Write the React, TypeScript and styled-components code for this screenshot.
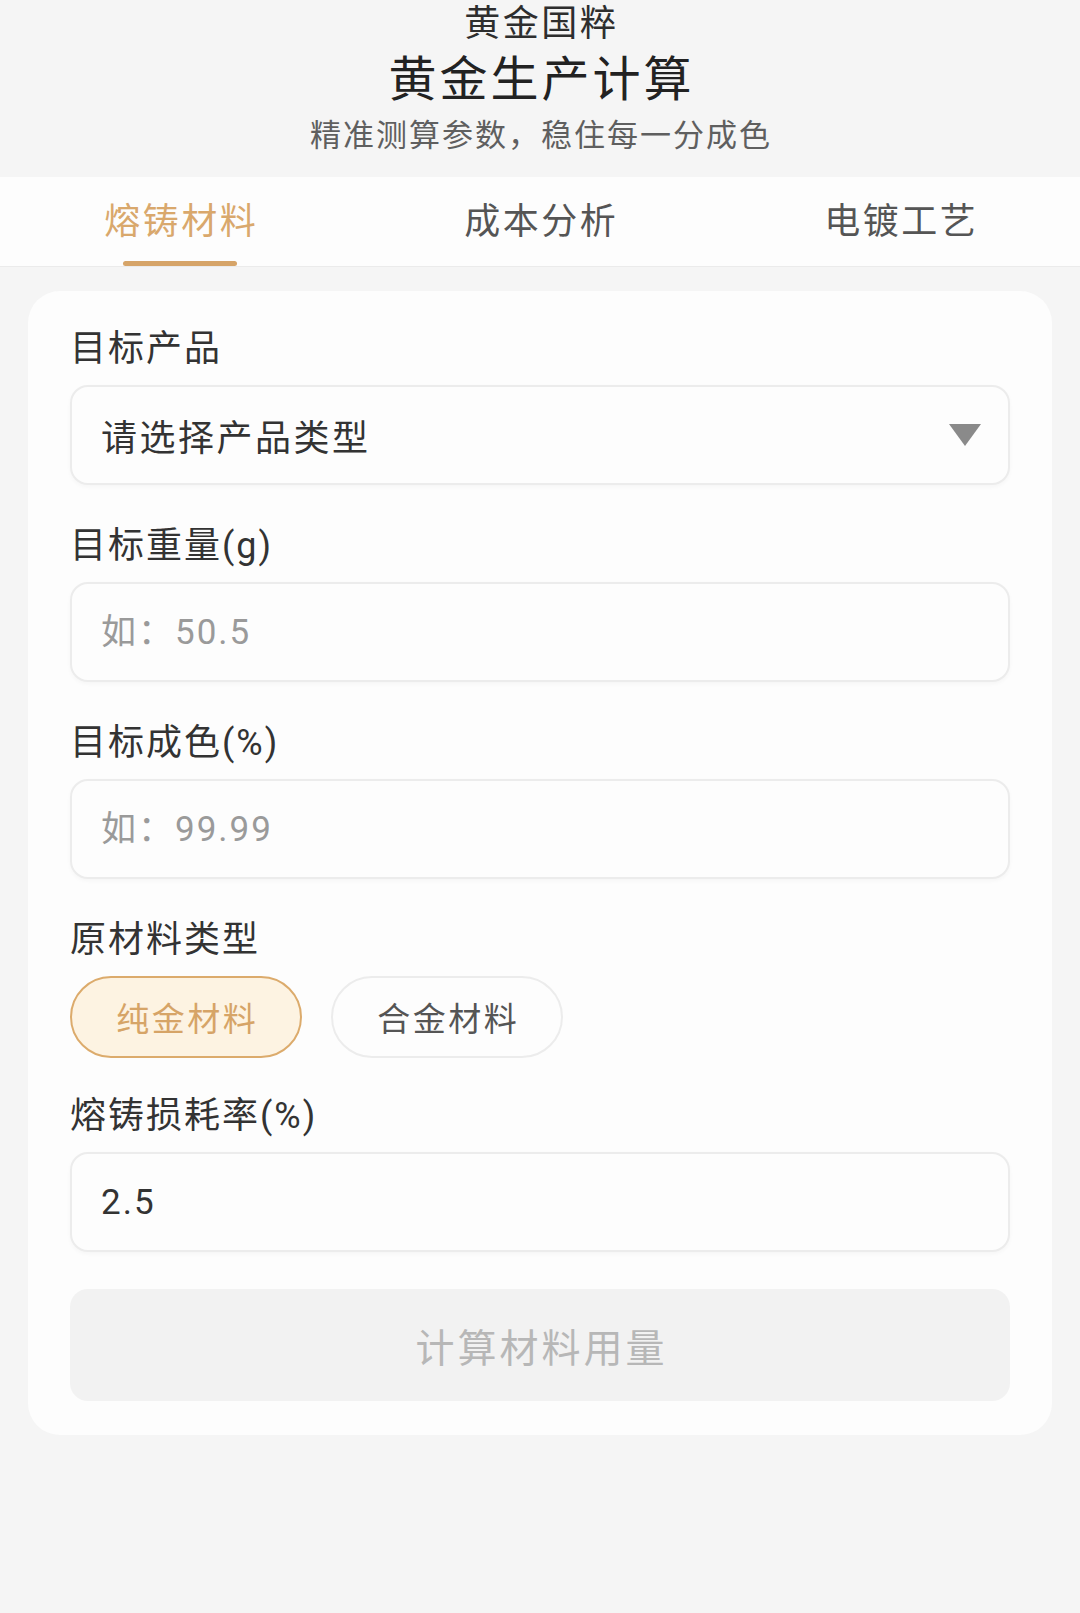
import React, { useState } from "react";
import styled, { createGlobalStyle } from "styled-components";

const GlobalStyle = createGlobalStyle`
  html, body {
    margin: 0;
    padding: 0;
    background: #f5f5f5;
  }
  body {
    font-family: Roboto, "Noto Sans CJK SC", "Noto Sans", sans-serif;
    color: #333;
  }
  * { box-sizing: border-box; }
`;

const Page = styled.div`
  width: 1080px;
  min-height: 1613px;
  background: #f5f5f5;
  display: flex;
  flex-direction: column;
`;

const Header = styled.header`
  display: flex;
  flex-direction: column;
  align-items: center;
  padding: 2px 0 21px;
`;

const Brand = styled.div`
  font-size: 36px;
  line-height: 44px;
  letter-spacing: 2.5px;
  text-indent: 2.5px;
  color: #2e2e2e;
`;

const Title = styled.h1`
  margin: 4px 0 0;
  font-size: 48px;
  line-height: 60px;
  font-weight: 400;
  letter-spacing: 3px;
  text-indent: 3px;
  color: #222;
`;

const Subtitle = styled.p`
  margin: 6px 0 0;
  font-size: 31px;
  line-height: 40px;
  letter-spacing: 2px;
  text-indent: 2px;
  color: #5f5f5f;
`;

const TabBar = styled.nav`
  display: flex;
  height: 90px;
  background: #fdfdfd;
  border-bottom: 1px solid #ebebeb;
`;

const Tab = styled.div<{ $active?: boolean }>`
  flex: 1;
  display: flex;
  flex-direction: column;
  align-items: center;
  padding-top: 20px;
  font-size: 36px;
  line-height: 50px;
  letter-spacing: 2.5px;
  text-indent: 2.5px;
  color: ${(p) => (p.$active ? "#d9a86c" : "#555")};
  cursor: pointer;
`;

const TabLine = styled.span<{ $active?: boolean }>`
  margin-top: auto;
  width: 114px;
  height: 5px;
  border-radius: 3px;
  background: ${(p) => (p.$active ? "#d6a468" : "transparent")};
`;

const Card = styled.main`
  margin: 24px 28px 0;
  padding: 34px 42px 34px;
  background: #fdfdfd;
  border-radius: 32px;
  display: flex;
  flex-direction: column;
`;

const Field = styled.section<{ $gap?: number }>`
  display: flex;
  flex-direction: column;
  margin-bottom: ${(p) => p.$gap ?? 37}px;
`;

const Label = styled.label`
  font-size: 36px;
  line-height: 48px;
  letter-spacing: 2px;
  color: #333;
  margin-bottom: 12px;
`;

const SelectBox = styled.div`
  height: 100px;
  border: 2px solid #ececec;
  border-radius: 18px;
  background: #fdfdfd;
  box-shadow: 0 2px 4px rgba(0, 0, 0, 0.03);
  display: flex;
  align-items: center;
  justify-content: space-between;
  padding: 0 27px 0 29px;
  font-size: 36px;
  letter-spacing: 2.5px;
  color: #333;
`;

const Arrow = styled.svg`
  width: 32px;
  height: 22px;
  flex: none;
`;

const Input = styled.input`
  height: 100px;
  width: 100%;
  border: 2px solid #ececec;
  border-radius: 18px;
  background: #fdfdfd;
  box-shadow: 0 2px 4px rgba(0, 0, 0, 0.03);
  padding: 0 29px;
  font-family: inherit;
  font-size: 35px;
  letter-spacing: 2px;
  color: #333;
  outline: none;
  &::placeholder {
    color: #9a9a9a;
  }
`;

const PillRow = styled.div`
  display: flex;
  gap: 29px;
`;

const Pill = styled.button<{ $active?: boolean }>`
  width: 232px;
  height: 82px;
  border-radius: 41px;
  border: 2px solid ${(p) => (p.$active ? "#dcab6c" : "#ececec")};
  background: ${(p) => (p.$active ? "#fdf3e2" : "#fdfdfd")};
  color: ${(p) => (p.$active ? "#d6a467" : "#555")};
  font-family: inherit;
  font-size: 33px;
  letter-spacing: 2.5px;
  text-indent: 2.5px;
  padding: 0;
  cursor: pointer;
`;

const SubmitButton = styled.button`
  height: 112px;
  border: none;
  border-radius: 18px;
  background: #f2f2f2;
  color: #b7b7b7;
  font-family: inherit;
  font-size: 39px;
  letter-spacing: 3px;
  text-indent: 3px;
`;

const tabs = ["熔铸材料", "成本分析", "电镀工艺"];

export default function App() {
  const [active, setActive] = useState(0);
  const [material, setMaterial] = useState(0);

  return (
    <Page>
      <GlobalStyle />
      <Header>
        <Brand>黄金国粹</Brand>
        <Title>黄金生产计算</Title>
        <Subtitle>精准测算参数，稳住每一分成色</Subtitle>
      </Header>
      <TabBar>
        {tabs.map((t, i) => (
          <Tab key={t} $active={i === active} onClick={() => setActive(i)}>
            {t}
            <TabLine $active={i === active} />
          </Tab>
        ))}
      </TabBar>
      <Card>
        <Field>
          <Label>目标产品</Label>
          <SelectBox>
            <span>请选择产品类型</span>
            <Arrow viewBox="0 0 32 22">
              <polygon points="0,0 32,0 16,22" fill="#8a8a8a" />
            </Arrow>
          </SelectBox>
        </Field>
        <Field>
          <Label>目标重量(g)</Label>
          <Input placeholder="如：50.5" />
        </Field>
        <Field>
          <Label>目标成色(%)</Label>
          <Input placeholder="如：99.99" />
        </Field>
        <Field $gap={34}>
          <Label>原材料类型</Label>
          <PillRow>
            <Pill $active={material === 0} onClick={() => setMaterial(0)}>
              纯金材料
            </Pill>
            <Pill $active={material === 1} onClick={() => setMaterial(1)}>
              合金材料
            </Pill>
          </PillRow>
        </Field>
        <Field>
          <Label>熔铸损耗率(%)</Label>
          <Input defaultValue="2.5" />
        </Field>
        <SubmitButton>计算材料用量</SubmitButton>
      </Card>
    </Page>
  );
}
